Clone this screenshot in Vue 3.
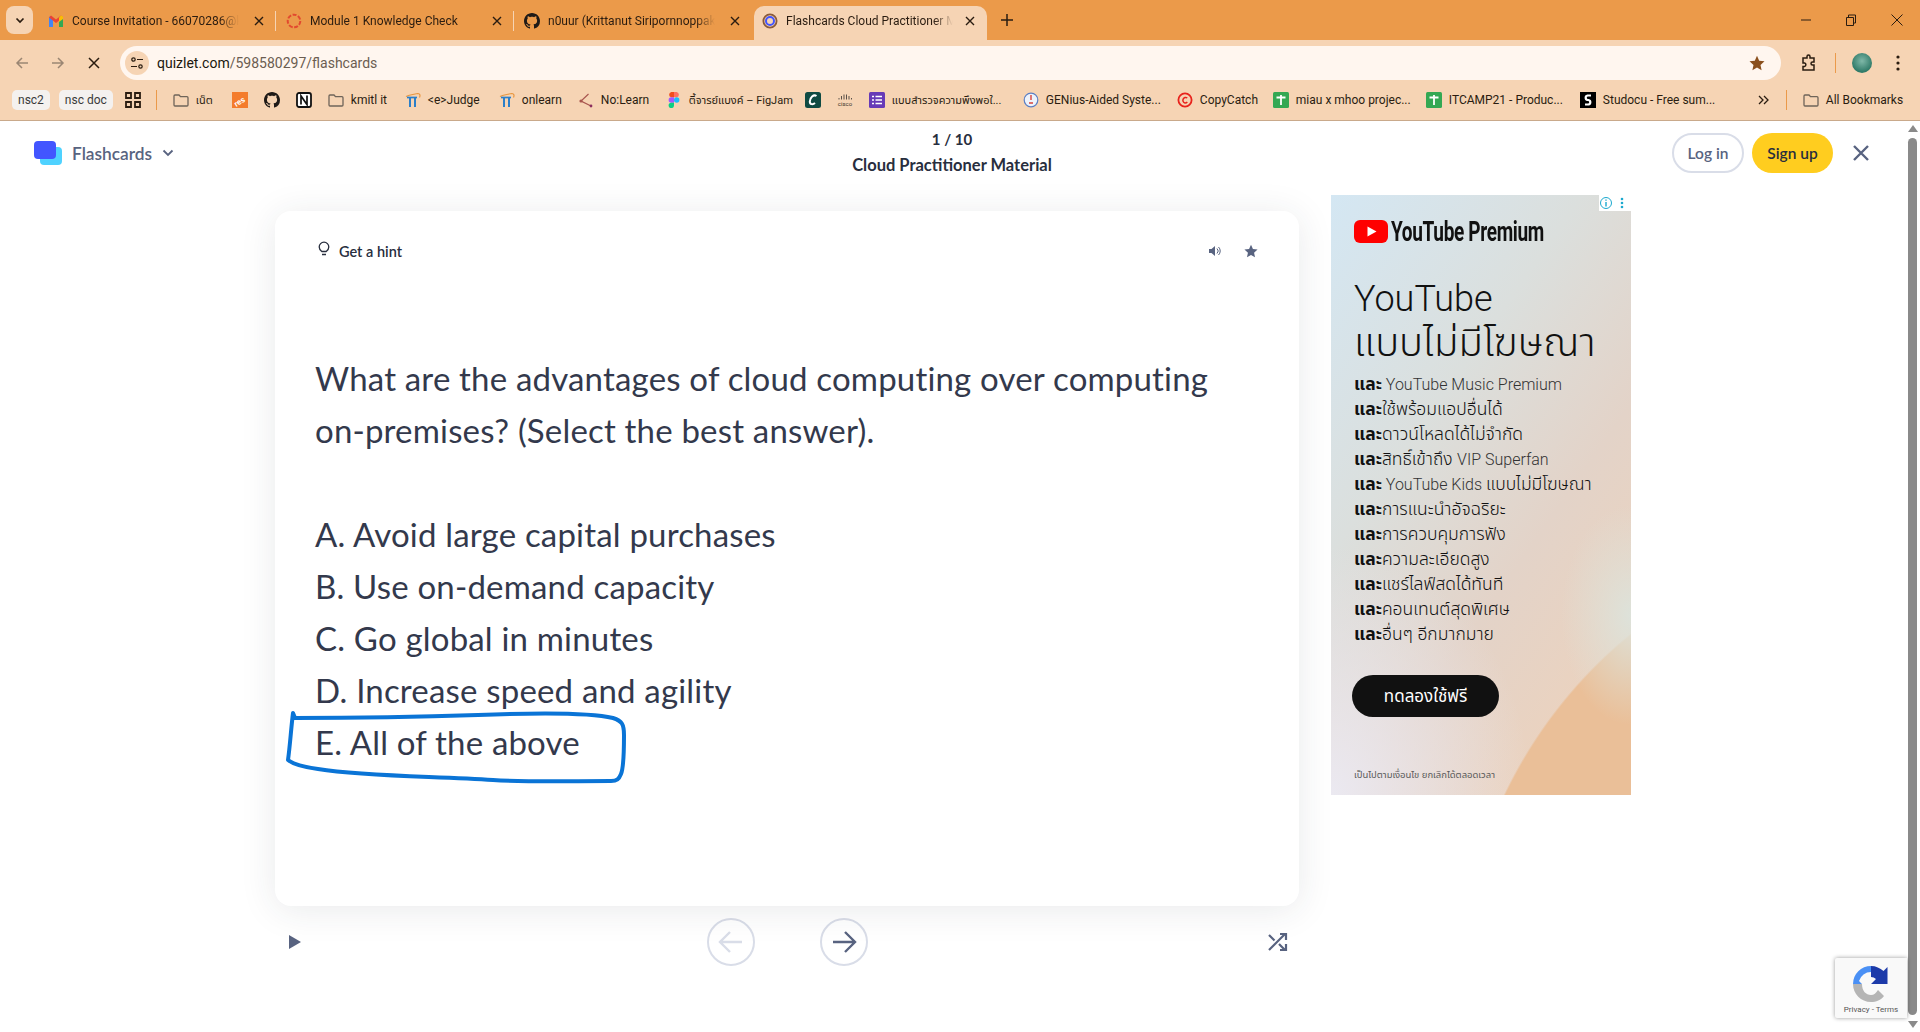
<script setup>
const tabs = [
  { id: 'gmail', title: 'Course Invitation - 66070286@k' },
  { id: 'ring', title: 'Module 1 Knowledge Check' },
  { id: 'github', title: 'n0uur (Krittanut Siripornnoppak' },
  { id: 'quizlet', title: 'Flashcards Cloud Practitioner M', active: true },
]

// w = label slot width, so each bookmark lands where chrome puts it
const bookmarks = [
  { icon: 'folder', label: 'เน็ต', w: 20, thai: true },
  { icon: 'orange' },
  { icon: 'github' },
  { icon: 'notion' },
  { icon: 'folder', label: 'kmitl it', w: 38 },
  { icon: 'judge', label: '<e>Judge', w: 55 },
  { icon: 'judge', label: 'onlearn', w: 40 },
  { icon: 'nolearn', label: 'No:Learn', w: 49 },
  { icon: 'figma', label: 'ตี้จารย์แบงค์ – FigJam', w: 100, thai: true },
  { icon: 'chegg' },
  { icon: 'cisco' },
  { icon: 'form', label: 'แบบสำรวจความพึงพอใ...', w: 115, thai: true },
  { icon: 'genius', label: 'GENius-Aided Syste...', w: 115 },
  { icon: 'copy', label: 'CopyCatch', w: 57 },
  { icon: 'sheet', label: 'miau x mhoo projec...', w: 114 },
  { icon: 'sheet', label: 'ITCAMP21 - Produc...', w: 115 },
  { icon: 'studocu', label: 'Studocu - Free sum...', w: 115 },
]

const question = [
  'What are the advantages of cloud computing over computing',
  'on-premises? (Select the best answer).',
  '',
  'A. Avoid large capital purchases',
  'B. Use on-demand capacity',
  'C. Go global in minutes',
  'D. Increase speed and agility',
  'E. All of the above',
]

const perks = [
  [{ t: ' YouTube Music Premium', latin: true }],
  [{ t: 'ใช้พร้อมแอปอื่นได้' }],
  [{ t: 'ดาวน์โหลดได้ไม่จำกัด' }],
  [{ t: 'สิทธิ์เข้าถึง ' }, { t: 'VIP Superfan', latin: true }],
  [{ t: ' YouTube Kids ', latin: true }, { t: 'แบบไม่มีโฆษณา' }],
  [{ t: 'การแนะนำอัจฉริยะ' }],
  [{ t: 'การควบคุมการฟัง' }],
  [{ t: 'ความละเอียดสูง' }],
  [{ t: 'แชร์ไลฟ์สดได้ทันที' }],
  [{ t: 'คอนเทนต์สุดพิเศษ' }],
  [{ t: 'อื่นๆ อีกมากมาย' }],
]

const octocat = 'M8 0C3.58 0 0 3.58 0 8c0 3.54 2.29 6.53 5.47 7.59.4.07.55-.17.55-.38 0-.19-.01-.82-.01-1.49-2.01.37-2.53-.49-2.69-.94-.09-.23-.48-.94-.82-1.13-.28-.15-.68-.52-.01-.53.63-.01 1.08.58 1.23.82.72 1.21 1.87.87 2.33.66.07-.52.28-.87.51-1.07-1.78-.2-3.64-.89-3.64-3.95 0-.87.31-1.59.82-2.15-.08-.2-.36-1.02.08-2.12 0 0 .67-.21 2.2.82.64-.18 1.32-.27 2-.27.68 0 1.36.09 2 .27 1.53-1.04 2.2-.82 2.2-.82.44 1.1.16 1.92.08 2.12.51.56.82 1.27.82 2.15 0 3.07-1.87 3.75-3.65 3.95.29.25.54.73.54 1.48 0 1.07-.01 1.93-.01 2.2 0 .21.15.46.55.38A8.013 8.013 0 0016 8c0-4.42-3.58-8-8-8z'
</script>

<template>
  <div class="window">
    <div class="tabstrip">
      <button class="tab-search">
        <svg width="12" height="12" viewBox="0 0 12 12"><path d="M2.500 4.500 6 8l3.500-3.500" fill="none" stroke="#2a1c10" stroke-width="1.700" /></svg>
      </button>
      <div v-for="(t, i) in tabs" :key="t.id" class="tab" :class="{ active: t.active, sep: i < 2 }">
        <svg v-if="t.id === 'gmail'" class="favicon" viewBox="0 0 16 16">
          <path d="M1 14V4l2 -1 2 2v9z" fill="#4285f4" />
          <path d="M15 14V4l-2 -1-2 2v9z" fill="#34a853" />
          <path d="M1 4.500 3 2.500 8 6.500 13 2.500 15 4.500 8 10z" fill="#ea4335" />
          <path d="M13 2.500 15 3.500V6l-4 3V4.500z" fill="#fbbc04" />
        </svg>
        <svg v-else-if="t.id === 'ring'" class="favicon" viewBox="0 0 16 16">
          <circle cx="8" cy="8" r="6.300" fill="none" stroke="#e2492f" stroke-width="2" stroke-dasharray="4 1.500" />
        </svg>
        <svg v-else-if="t.id === 'github'" class="favicon" viewBox="0 0 16 16"><path :d="octocat" fill="#1f1a17" /></svg>
        <svg v-else class="favicon" viewBox="0 0 16 16">
          <circle cx="8" cy="8" r="6.600" fill="none" stroke="#8a5a3a" stroke-width="1.800" />
          <circle cx="8" cy="8" r="4" fill="none" stroke="#4255ff" stroke-width="2" />
        </svg>
        <span class="tab-title">{{ t.title }}</span>
        <svg class="tab-close" width="10" height="10" viewBox="0 0 10 10"><path d="M1 1l8 8M9 1l-8 8" stroke="#2a1c10" stroke-width="1.400" /></svg>
      </div>
      <svg class="new-tab" width="12" height="12" viewBox="0 0 12 12"><path d="M6 0v12M0 6h12" stroke="#2a1c10" stroke-width="1.500" /></svg>
      <div class="win-controls">
        <svg width="10" height="10" viewBox="0 0 10 10"><path d="M0 5h10" stroke="#2a1c10" /></svg>
        <svg width="10" height="12" viewBox="0 0 10 12"><path d="M.5 3.500h7v8h-7zM2.500 3.500v-2.500h7v8h-2" fill="none" stroke="#2a1c10" /></svg>
        <svg width="12" height="12" viewBox="0 0 12 12"><path d="M.5.5l11 11M11.500.5l-11 11" stroke="#2a1c10" /></svg>
      </div>
    </div>

    <div class="toolbar">
      <svg class="nav-ico" width="14" height="14" viewBox="0 0 14 14"><path d="M13 7H2M7 2 2 7l5 5" fill="none" stroke="#9b8673" stroke-width="1.500" /></svg>
      <svg class="nav-ico" width="14" height="14" viewBox="0 0 14 14"><path d="M1 7h11M7 2l5 5-5 5" fill="none" stroke="#9b8673" stroke-width="1.500" /></svg>
      <svg class="nav-ico" width="14" height="14" viewBox="0 0 14 14"><path d="M2 2l10 10M12 2 2 12" fill="none" stroke="#2a1c10" stroke-width="1.500" /></svg>
      <div class="omnibox">
        <span class="site-ico">
          <svg width="14" height="14" viewBox="0 0 14 14">
            <circle cx="3.500" cy="3.500" r="1.700" fill="none" stroke="#2a1c10" stroke-width="1.200" />
            <path d="M7 3.500h6M1 10.500h6" stroke="#2a1c10" stroke-width="1.200" />
            <circle cx="10.500" cy="10.500" r="1.700" fill="none" stroke="#2a1c10" stroke-width="1.200" />
          </svg>
        </span>
        <span class="url">quizlet.com<span class="url-dim">/598580297/flashcards</span></span>
        <svg class="url-star" width="16" height="16" viewBox="0 0 16 16"><path d="M8 .8l2.200 4.900 5.300.6-4 3.600 1.100 5.300L8 12.500l-4.600 2.700 1.100-5.300-4-3.600 5.300-.6z" fill="#8a4f1c" /></svg>
      </div>
      <svg class="ext" width="16" height="18" viewBox="0 0 16 18"><path d="M2 4h4V2.500a1.500 1.500 0 013 0V4h4v4h-1.500a1.500 1.500 0 000 3H13v5H2v-3.500h1.500a1.800 1.800 0 000-3.500H2z" fill="none" stroke="#2a1c10" stroke-width="1.500" /></svg>
      <span class="tool-sep"></span>
      <span class="avatar"></span>
      <svg class="dots" width="4" height="16" viewBox="0 0 4 16"><circle cx="2" cy="2" r="1.600" fill="#2a1c10" /><circle cx="2" cy="8" r="1.600" fill="#2a1c10" /><circle cx="2" cy="14" r="1.600" fill="#2a1c10" /></svg>
    </div>

    <div class="bookmarks">
      <span class="chip">nsc2</span>
      <span class="chip">nsc doc</span>
      <svg class="apps" width="16" height="16" viewBox="0 0 16 16"><path d="M1 1h5v5H1zM10 1h5v5h-5zM1 10h5v5H1zM10 10h5v5h-5z" fill="none" stroke="#2a1c10" stroke-width="1.800" /></svg>
      <span class="bm-sep first"></span>
      <div class="bm-list">
        <div v-for="(b, i) in bookmarks" :key="i" class="bm">
          <svg class="bm-ico" viewBox="0 0 16 16">
            <path v-if="b.icon === 'folder'" d="M1 4a1 1 0 011-1h4l1.500 1.700H14a1 1 0 011 1V13a1 1 0 01-1 1H2a1 1 0 01-1-1z" fill="none" stroke="#6f6459" stroke-width="1.300" />
            <template v-else-if="b.icon === 'orange'">
              <rect width="16" height="16" fill="#f47c2c" />
              <text x="1" y="12" font-size="8" font-weight="700" font-family="Roboto, sans-serif" fill="#fff" transform="rotate(-32 8 8)">res</text>
            </template>
            <path v-else-if="b.icon === 'github'" :d="octocat" fill="#1f1a17" />
            <template v-else-if="b.icon === 'notion'">
              <rect x="1" y="1" width="14" height="14" rx="2" fill="#fff" stroke="#111" stroke-width="1.800" />
              <path d="M5 12.500V4l6 8.500V3.500" fill="none" stroke="#111" stroke-width="1.700" />
            </template>
            <template v-else-if="b.icon === 'judge'">
              <path d="M1 4.500C5 2.500 9 2.500 13 1.500c2 0 2.500 2 1.500 4" fill="none" stroke="#e8963f" stroke-width="1.200" />
              <path d="M2 5.500h10" stroke="#2b7fc9" stroke-width="1.700" />
              <path d="M5 5.500V15M10 5.500V15" stroke="#2b7fc9" stroke-width="2" />
            </template>
            <template v-else-if="b.icon === 'nolearn'">
              <path d="M10.500 2 3 9l10 5" fill="none" stroke="#a8554e" stroke-width="1.200" />
              <circle cx="3" cy="9" r="1.600" fill="#a8554e" />
              <circle cx="13" cy="14" r="1.400" fill="#8c2f5e" />
            </template>
            <template v-else-if="b.icon === 'figma'">
              <path d="M8 0H5.300a2.700 2.700 0 000 5.300H8z" fill="#f24e1e" />
              <path d="M8 0h2.700a2.700 2.700 0 010 5.300H8z" fill="#ff7262" />
              <path d="M8 5.300H5.300a2.700 2.700 0 000 5.400H8z" fill="#a259ff" />
              <circle cx="10.700" cy="8" r="2.700" fill="#1abcfe" />
              <path d="M8 10.700H5.300A2.700 2.700 0 108 13.400z" fill="#0acf83" />
            </template>
            <template v-else-if="b.icon === 'chegg'">
              <rect width="16" height="16" rx="2.500" fill="#0f4a42" />
              <path d="M11.500 4C8.500 2 5 5.500 4.800 9.500c-.1 3 3 3.500 5.200 1.500" fill="none" stroke="#fff" stroke-width="2" />
            </template>
            <template v-else-if="b.icon === 'cisco'">
              <path d="M2 6v1.500M4.500 4v3.500M7 2.500v5M9.500 2.500v5M12 4v3.500M14.500 6v1.500" stroke="#5a5048" stroke-width="1" />
              <text x="8" y="14" text-anchor="middle" font-size="6" font-family="Roboto, sans-serif" fill="#3a322b">cisco</text>
            </template>
            <template v-else-if="b.icon === 'form'">
              <rect width="16" height="16" rx="1.500" fill="#673ab7" />
              <path d="M6.500 4.500H13M6.500 8H13M6.500 11.500H13M3 4.500h2M3 8h2M3 11.500h2" stroke="#fff" stroke-width="1.500" />
            </template>
            <template v-else-if="b.icon === 'genius'">
              <circle cx="8" cy="8" r="6.800" fill="#eef3fb" stroke="#5b7fc4" stroke-width="1.200" />
              <path d="M8 3v5M6 11h4" stroke="#d9433a" stroke-width="1.400" />
            </template>
            <template v-else-if="b.icon === 'copy'">
              <circle cx="8" cy="8" r="6.600" fill="none" stroke="#e8231c" stroke-width="1.800" />
              <path d="M10.300 6A2.800 2.800 0 108.000 11a2.800 2.800 0 002.300-1" fill="none" stroke="#e8231c" stroke-width="1.500" />
            </template>
            <template v-else-if="b.icon === 'sheet'">
              <rect width="16" height="16" rx="1.500" fill="#34a853" />
              <path d="M3.500 5.500h9M8 3v10" stroke="#fff" stroke-width="1.800" />
            </template>
            <template v-else>
              <rect width="16" height="16" fill="#000" />
              <path d="M11 3.500H7.500a2.300 2.300 0 000 4.500h1a2.300 2.300 0 010 4.500H5" fill="none" stroke="#fff" stroke-width="2.200" />
            </template>
          </svg>
          <span v-if="b.label" class="bm-label" :class="{ thai: b.thai }" :style="{ width: b.w + 'px' }">{{ b.label }}</span>
        </div>
      </div>
      <svg class="chev-more" width="12" height="10" viewBox="0 0 12 10"><path d="M1 1l4 4-4 4M6 1l4 4-4 4" fill="none" stroke="#2a1c10" stroke-width="1.300" /></svg>
      <span class="bm-sep"></span>
      <div class="bm all">
        <svg class="bm-ico" viewBox="0 0 16 16"><path d="M1 4a1 1 0 011-1h4l1.500 1.700H14a1 1 0 011 1V13a1 1 0 01-1 1H2a1 1 0 01-1-1z" fill="none" stroke="#6f6459" stroke-width="1.300" /></svg>
        <span class="bm-label">All Bookmarks</span>
      </div>
    </div>

    <div class="viewport">
      <div class="page">
        <header class="page-head">
          <div class="mode">
            <span class="logo"><i class="logo-back"></i><i class="logo-front"></i></span>
            <span class="mode-name">Flashcards</span>
            <svg width="12" height="8" viewBox="0 0 12 8"><path d="M1.500 1.500 6 6l4.500-4.500" fill="none" stroke="#586380" stroke-width="1.800" /></svg>
          </div>
          <div class="set-info">
            <div>1 / 10</div>
            <div class="set-name">Cloud Practitioner Material</div>
          </div>
          <div class="auth">
            <button class="btn-login">Log in</button>
            <button class="btn-signup">Sign up</button>
            <svg class="close" width="18" height="18" viewBox="0 0 18 18"><path d="M2 2l14 14M16 2 2 16" stroke="#586380" stroke-width="2.400" /></svg>
          </div>
        </header>

        <main class="stage">
          <section class="study">
            <div class="card">
              <div class="card-top">
                <div class="hint">
                  <svg width="12" height="16" viewBox="0 0 12 16"><path d="M3.800 10.500C2.500 9.500 1.200 8.300 1.200 6a4.800 4.800 0 019.600 0c0 2.300-1.300 3.500-2.600 4.500zM4 13.500h4" fill="none" stroke="#282e3e" stroke-width="1.300" /></svg>
                  <span>Get a hint</span>
                </div>
                <div class="card-actions">
                  <svg width="14" height="14" viewBox="0 0 14 14"><path d="M1 5h2.500L7 2v10L3.500 9H1z" fill="#586380" /><path d="M9 4.500a3.500 3.500 0 010 5M10.500 3a5.500 5.500 0 010 8" fill="none" stroke="#586380" stroke-width="1" /></svg>
                  <svg width="14" height="14" viewBox="0 0 16 16"><path d="M8 .8l2.200 4.900 5.300.6-4 3.600 1.100 5.300L8 12.500l-4.600 2.700 1.100-5.300-4-3.600 5.300-.6z" fill="#586380" /></svg>
                </div>
              </div>
              <div class="term">
                <div v-for="(line, i) in question" :key="i" class="term-line">{{ line }}</div>
              </div>
              <svg class="scribble" width="340" height="76" viewBox="0 0 340 76">
                <path d="M5 2 7 7C60 7 130 6 190 4 240 2 300 1 325 7 334 10 336 13 336 24 336 40 336 56 333 63 331 68 329 70 323 70 280 70 235 71 205 69 150 65 80 66 30 58 15 56 5 53 0 49 2 35 3 18 5 2Z" fill="none" stroke="#0a74d6" stroke-width="4" stroke-linejoin="round" />
              </svg>
            </div>
            <div class="controls">
              <svg width="14" height="14" viewBox="0 0 14 14"><path d="M1 0l12 7-12 7z" fill="#586380" /></svg>
              <div class="arrows">
                <button class="round">
                  <svg width="26" height="24" viewBox="0 0 26 24"><path d="M24 12H3M12 2 2 12l10 10" fill="none" stroke="#d9dde8" stroke-width="2.400" /></svg>
                </button>
                <button class="round">
                  <svg width="26" height="24" viewBox="0 0 26 24"><path d="M2 12h21M14 2l10 10-10 10" fill="none" stroke="#586380" stroke-width="2.400" /></svg>
                </button>
              </div>
              <svg width="20" height="20" viewBox="0 0 20 20"><path d="M1 3l5.500 5.500M11 12l6 6M1 18 17 2M12 2h6v6M18 12v6h-6" fill="none" stroke="#586380" stroke-width="2.200" /></svg>
            </div>
          </section>

          <aside class="ad">
            <span class="ad-badge">
              <svg width="14" height="14" viewBox="0 0 14 14"><circle cx="7" cy="7" r="5.500" fill="none" stroke="#1ba9cf" /><path d="M7 6v4.500M7 3.500v1.300" stroke="#1ba9cf" stroke-width="1.400" /></svg>
              <svg width="4" height="12" viewBox="0 0 4 12"><circle cx="2" cy="2" r="1.300" fill="#1ba9cf" /><circle cx="2" cy="6" r="1.300" fill="#1ba9cf" /><circle cx="2" cy="10" r="1.300" fill="#1ba9cf" /></svg>
            </span>
            <div class="yt-brand">
              <svg width="34" height="23" viewBox="0 0 34 23"><rect width="34" height="23" rx="6" fill="#f00" /><path d="M13.500 6.500v10l9-5z" fill="#fff" /></svg>
              <span class="yt-word">YouTube Premium</span>
            </div>
            <div class="ad-title">YouTube</div>
            <div class="ad-title thai">แบบไม่มีโฆษณา</div>
            <ul class="perks">
              <li v-for="(p, i) in perks" :key="i"><b>และ</b><span v-for="(s, j) in p" :key="j" :class="{ latin: s.latin }">{{ s.t }}</span></li>
            </ul>
            <span class="ad-cta">ทดลองใช้ฟรี</span>
            <div class="ad-foot">เป็นไปตามเงื่อนไข ยกเลิกได้ตลอดเวลา</div>
          </aside>
        </main>
      </div>

      <div class="scrollbar">
        <svg width="10" height="7" viewBox="0 0 10 7"><path d="M5 0l5 7H0z" fill="#8a8a8a" /></svg>
        <span class="thumb"></span>
        <svg width="10" height="7" viewBox="0 0 10 7"><path d="M5 7 0 0h10z" fill="#8a8a8a" /></svg>
      </div>

      <div class="recaptcha">
        <svg width="40" height="40" viewBox="0 0 40 40">
          <path d="M20 2A18 18 0 002 20h9l-3-3A12.500 12.500 0 0120 8z" fill="#4a90f5" />
          <path d="M20 2c5 0 9 2 12.500 5l4-4V20H20l5-5a8 8 0 00-5-2z" fill="#1c3aa9" />
          <path d="M2 20c0 10 8 18 18 18 5 0 10-2 13-6l-6-6c-2 3-4 5-7 5-5 0-9-4-9-11z" fill="#b5b5b5" />
        </svg>
        <span class="rc-terms">Privacy - Terms</span>
      </div>
    </div>
  </div>
</template>

<style>
html, body { margin: 0; height: 100%; overflow: hidden; background: #fff; }
</style>

<style scoped>
.window {
  height: 1032px;
  display: flex;
  flex-direction: column;
  font-family: Roboto, "Noto Sans", "Noto Sans Thai", sans-serif;
  position: relative;
}

/* browser chrome */
.tabstrip {
  height: 40px;
  background: #eb9a4a;
  display: flex;
  align-items: flex-end;
  padding-left: 6px;
  flex: none;
}
.tab-search {
  width: 27px;
  height: 28px;
  margin: 0 5px 6px 0;
  border: 0;
  padding: 0;
  border-radius: 8px;
  background: #f6d4b4;
  display: flex;
  align-items: center;
  justify-content: center;
}
.tab {
  width: 238px;
  height: 34px;
  box-sizing: border-box;
  display: flex;
  align-items: center;
  padding: 0 12px 4px 10px;
  position: relative;
  font-size: 12px;
  color: #2a1c10;
}
.tab.sep::after {
  content: '';
  position: absolute;
  right: 0;
  top: 5px;
  height: 20px;
  width: 1px;
  background: #f6d4b4;
}
.tab.active {
  background: #f6d4b4;
  border-radius: 10px 10px 0 0;
  margin-left: 2px;
  width: 233px;
  padding-left: 8px;
  padding-right: 12px;
}
.favicon { width: 16px; height: 16px; flex: none; }
.tab-title {
  margin-left: 8px;
  width: 172px;
  overflow: hidden;
  white-space: nowrap;
  -webkit-mask-image: linear-gradient(90deg, #000 86%, transparent 97%);
  mask-image: linear-gradient(90deg, #000 86%, transparent 97%);
  flex: none;
}
.tab-close { margin-left: auto; flex: none; }
.new-tab { margin: 0 0 14px 14px; }
.win-controls {
  margin-left: auto;
  display: flex;
  align-items: center;
  gap: 35px;
  padding: 0 17px 10px 0;
  height: 30px;
  box-sizing: border-box;
}

.toolbar {
  height: 40px;
  box-sizing: border-box;
  padding: 6px 0 0 15px;
  background: #f6d4b4;
  display: flex;
  align-items: center;
  flex: none;
}
.nav-ico { margin-right: 22px; flex: none; }
.omnibox {
  width: 1661px;
  height: 34px;
  margin-left: -3px;
  box-sizing: border-box;
  border-radius: 17px;
  background: #fff6ef;
  display: flex;
  align-items: center;
  padding: 0 16px 0 5px;
  flex: none;
  font-size: 14px;
}
.site-ico {
  width: 24px;
  height: 24px;
  border-radius: 50%;
  background: #f6d4b4;
  display: flex;
  align-items: center;
  justify-content: center;
}
.url { margin-left: 8px; color: #20160c; }
.url-dim { color: #6b5d51; }
.url-star { margin-left: auto; }
.ext { margin-left: 20px; flex: none; }
.tool-sep { width: 1px; height: 20px; background: #eb9a4a; margin: 0 16px 0 18px; }
.avatar {
  width: 20px;
  height: 20px;
  border-radius: 50%;
  background: radial-gradient(circle at 50% 40%, #7fb8a8, #2f7a68 70%);
}
.dots { margin-left: 24px; }

.bookmarks {
  height: 40px;
  background: #f6d4b4;
  border-bottom: 1px solid #c9a98b;
  display: flex;
  align-items: center;
  padding-left: 12px;
  flex: none;
  font-size: 12px;
  color: #2a1c10;
}
.chip {
  height: 20px;
  line-height: 20px;
  padding: 0 6px;
  border-radius: 5px;
  background: #f4f1ef;
  margin-right: 9px;
  color: #3a3a3a;
}
.apps { margin-left: 3px; flex: none; }
.bm-sep { width: 1px; height: 20px; background: #eb9a4a; margin: 0 16px; flex: none; }
.bm-sep.first { margin: 0 16px 0 15px; }
.bm-list { display: flex; align-items: center; gap: 16px; width: 1569px; overflow: hidden; flex: none; }
.bm { display: flex; align-items: center; gap: 7px; flex: none; white-space: nowrap; }
.bm-ico { width: 16px; height: 16px; flex: none; }
.bm-label.thai { font-size: 11px; }
.chev-more { margin-left: 16px; flex: none; }

/* quizlet page */
.viewport { flex: 1; display: flex; min-height: 0; position: relative; }
.page { flex: 1; min-width: 0; background: #fff; }
.page-head {
  height: 74px;
  position: relative;
  display: flex;
  justify-content: space-between;
  padding: 12px 34px 0;
  box-sizing: border-box;
}
.mode {
  display: flex;
  align-items: center;
  height: 40px;
  gap: 10px;
  color: #586380;
  font: 600 17.300px Lato, sans-serif;
}
.logo { width: 28px; height: 24px; position: relative; display: block; }
.logo-back, .logo-front { position: absolute; border-radius: 4px; width: 22px; height: 18px; }
.logo-back { left: 6px; top: 6px; background: #4fd2ff; }
.logo-front { left: 0; top: 0; background: #4255ff; }
.set-info {
  position: absolute;
  left: 0;
  right: 0;
  top: 5px;
  text-align: center;
  font: 700 15px/26px Lato, sans-serif;
  color: #282e3e;
}
.set-name { font-size: 16.500px; }
.auth {
  display: flex;
  align-items: center;
  gap: 8px;
  height: 40px;
  font: 600 15.500px Lato, sans-serif;
  position: relative;
}
.btn-login, .btn-signup {
  height: 40px;
  border-radius: 20px;
  font: inherit;
  padding: 0;
}
.btn-login { width: 72px; background: #fff; border: 2px solid #d9dde8; color: #586380; }
.btn-signup { width: 81px; background: #ffcd1f; border: 0; color: #282e3e; }
.close { margin-left: 11px; }

.stage { display: flex; align-items: flex-start; padding-left: 275px; gap: 32px; }
.study { width: 1024px; padding-top: 16px; }
.card {
  height: 695px;
  box-sizing: border-box;
  background: #fff;
  border-radius: 16px;
  box-shadow: 0 4px 36px rgba(40, 46, 62, 0.1);
  padding: 30px 40px;
  position: relative;
  color: #282e3e;
}
.card-top { display: flex; justify-content: space-between; align-items: center; height: 20px; }
.hint { display: flex; align-items: center; gap: 9px; font: 600 14.500px Lato, sans-serif; padding-left: 3px; }
.hint svg { margin-top: -4px; }
.card-actions { display: flex; gap: 22px; padding-right: 2px; margin-right: -1px; }
.term {
  margin-top: 91px;
  font: 400 33px/52px Lato, sans-serif;
  letter-spacing: 0.18px;
  color: #33394c;
}
.term-line { min-height: 52px; white-space: nowrap; }
.scribble { position: absolute; left: 13px; top: 500px; overflow: visible; }
.controls {
  display: flex;
  justify-content: space-between;
  align-items: center;
  padding: 12px 11px 0 13px;
  height: 48px;
}
.arrows { display: flex; gap: 65px; margin-left: 4px; }
.round {
  width: 48px;
  height: 48px;
  box-sizing: border-box;
  border: 2px solid #d9dde8;
  border-radius: 50%;
  background: #fff;
  padding: 0;
  display: flex;
  align-items: center;
  justify-content: center;
}

.ad {
  width: 300px;
  height: 600px;
  box-sizing: border-box;
  padding: 24px 0 0 23px;
  position: relative;
  color: #111;
  font-family: "Noto Sans", "Noto Sans Thai", sans-serif;
  background:
    radial-gradient(ellipse 70px 110px at 100% 420px, #dde2da, transparent),
    radial-gradient(circle 468px at 595px 801px, #eabf98 99.6%, transparent 100%),
    radial-gradient(ellipse 200px 250px at 0 100%, #ebe9f1, transparent),
    linear-gradient(125deg, #d4e7f3 0%, #dbdfdd 35%, #e3d3c8 62%, #f0d2b9 100%);
}
.ad-badge {
  position: absolute;
  right: 0;
  top: 0;
  width: 32px;
  height: 16px;
  background: #fff;
  display: flex;
  align-items: center;
  gap: 7px;
}
.yt-brand { display: flex; align-items: center; gap: 3px; height: 24px; }
.yt-word {
  display: inline-block;
  font: 700 28px Roboto, sans-serif;
  letter-spacing: -0.5px;
  white-space: nowrap;
  transform: scaleX(0.68);
  transform-origin: left center;
}
.ad-title { font: 300 36px/42px Roboto, "Noto Sans Thai", sans-serif; margin-top: 35px; }
.ad-title.thai { margin-top: -1px; font: 300 40px/44px "Noto Sans", "Noto Sans Thai", sans-serif; }
.perks {
  list-style: none;
  margin: 8px 0 0;
  padding: 0;
  font-size: 17.500px;
  line-height: 25px;
  font-weight: 300;
  white-space: nowrap;
}
.perks b { font-weight: 700; }
.perks .latin { font: 300 16px Roboto, sans-serif; color: #333; }
.ad-cta {
  display: block;
  width: 147px;
  height: 42px;
  margin: 29px 0 0 -2px;
  border-radius: 21px;
  background: #111;
  color: #fff;
  font-size: 17px;
  line-height: 42px;
  text-align: center;
}
.ad-foot { margin-top: 51px; font-size: 9.500px; color: #5a5a5a; white-space: nowrap; }

.scrollbar {
  width: 16px;
  display: flex;
  flex-direction: column;
  align-items: center;
  padding: 4px 3px 4px 4px;
  box-sizing: border-box;
  gap: 6px;
  background: #fff;
}
.thumb { width: 9px; flex: 1; background: #8a8a8a; border-radius: 5px; }

.recaptcha {
  position: absolute;
  left: 1835px;
  top: 837px;
  width: 72px;
  height: 60px;
  box-sizing: border-box;
  background: #f9f9f9;
  box-shadow: 0 0 4px rgba(0, 0, 0, 0.4);
  border-radius: 2px 0 0 2px;
  display: flex;
  flex-direction: column;
  align-items: center;
  padding-top: 6px;
}
.rc-terms { font: 8px Roboto, sans-serif; color: #555; margin-top: 1px; white-space: nowrap; }
</style>
